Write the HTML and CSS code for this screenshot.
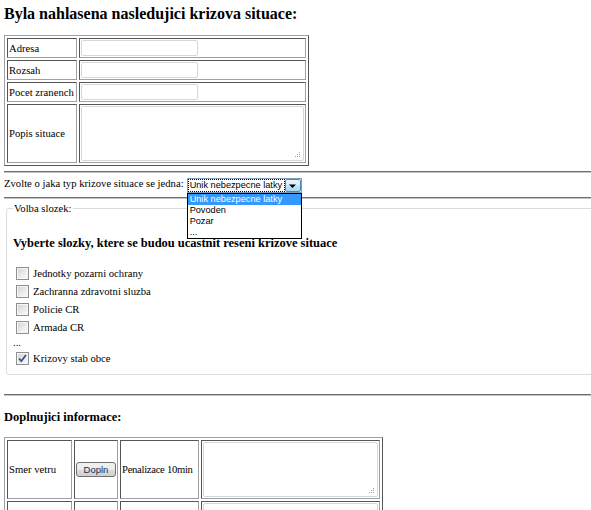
FILE: index.html
```html
<!DOCTYPE html>
<html>
<head>
<meta charset="utf-8">
<title>Krizova situace</title>
<link rel="stylesheet" href="styles.css">
</head>
<body>
<h2 class="title">Byla nahlasena nasledujici krizova situace:</h2>
<table class="grid report">
  <tr><td class="lbl">Adresa</td><td class="fld"><input class="txt" type="text"></td></tr>
  <tr><td class="lbl">Rozsah</td><td class="fld"><input class="txt" type="text"></td></tr>
  <tr><td class="lbl">Pocet zranench</td><td class="fld"><input class="txt" type="text"></td></tr>
  <tr><td class="lbl">Popis situace</td><td class="fld"><textarea class="area wide"></textarea></td></tr>
</table>
<hr class="rule first">
<div class="choose">
  <span class="choose-label">Zvolte o jaka typ krizove situace se jedna:</span>
  <div class="select">
    <span class="select-text"><span class="focus">Unik nebezpecne latky</span></span>
    <span class="select-btn"><svg width="9" height="6" viewBox="0 0 9 6"><path d="M1 1.5h7L4.5 5z" fill="#000"/></svg></span>
    <ul class="options">
      <li class="hl">Unik nebezpecne latky</li>
      <li>Povoden</li>
      <li>Pozar</li>
      <li>...</li>
    </ul>
  </div>
</div>
<hr class="rule">
<fieldset class="units">
  <legend>Volba slozek:</legend>
  <h3 class="sub">Vyberte slozky, ktere se budou ucastnit reseni krizove situace</h3>
  <div class="cb-row"><span class="cb"></span>Jednotky pozarni ochrany</div>
  <div class="cb-row"><span class="cb"></span>Zachranna zdravotni sluzba</div>
  <div class="cb-row"><span class="cb"></span>Policie CR</div>
  <div class="cb-row"><span class="cb"></span>Armada CR</div>
  <div class="dots">...</div>
  <div class="cb-row"><span class="cb"><svg width="11" height="11" viewBox="0 0 11 11"><path d="M2 5.5l2.3 2.6L9 2" fill="none" stroke="#3b4f8c" stroke-width="1.8"/></svg></span>Krizovy stab obce</div>
</fieldset>
<hr class="rule third">
<h3 class="sub2">Doplnujici informace:</h3>
<table class="grid extra">
  <tr>
    <td class="c1">Smer vetru</td>
    <td class="c2"><button class="btn" type="button">Dopln</button></td>
    <td class="c3">Penalizace 10min</td>
    <td class="c4"><textarea class="area narrow"></textarea></td>
  </tr>
  <tr>
    <td class="c1">&nbsp;</td>
    <td class="c2">&nbsp;</td>
    <td class="c3">&nbsp;</td>
    <td class="c4"><textarea class="area narrow"></textarea></td>
  </tr>
</table>
</body>
</html>
```
FILE: styles.css
```css
html {
  overflow: hidden;
  background: #fff;
}
body {
  margin: 0 0 0 4px;
  width: 660px;
  font-family: "Liberation Serif", "Times New Roman", serif;
  font-size: 10.67px;
  color: #000;
}
.title {
  font-size: 16px;
  line-height: 18px;
  font-weight: bold;
  margin: 5px 0 12px;
}
table.grid {
  border-collapse: separate;
  border-spacing: 2px;
  border: 1px solid;
  border-color: #a0a0a0 #555 #555 #a0a0a0;
}
table.grid td {
  border: 1px solid;
  border-color: #555 #a0a0a0 #a0a0a0 #555;
  padding: 1px;
  line-height: 13px;
  white-space: nowrap;
}
.report .lbl {
  width: 66px;
}
.report .fld {
  width: 223px;
}
.txt {
  display: block;
  box-sizing: border-box;
  width: 117px;
  height: 16px;
  margin: 0;
  padding: 0 2px;
  border: 1px solid #d4d8dd;
  border-radius: 2px;
  font: 10.67px "Liberation Sans", Arial, sans-serif;
}
.area {
  display: block;
  box-sizing: border-box;
  height: 55px;
  margin: 0;
  padding: 1px;
  border: 1px solid #d4d8dd;
  border-radius: 2px;
  resize: none;
  font: 10.67px "Liberation Sans", Arial, sans-serif;
  background-color: #fff;
  background-image:
    linear-gradient(#a0a0a0, #a0a0a0),
    linear-gradient(#a0a0a0, #a0a0a0),
    linear-gradient(#a0a0a0, #a0a0a0),
    linear-gradient(#a0a0a0, #a0a0a0),
    linear-gradient(#a0a0a0, #a0a0a0),
    linear-gradient(#a0a0a0, #a0a0a0);
  background-size: 1px 1px;
  background-repeat: no-repeat;
  background-position:
    right 3px bottom 3px,
    right 5px bottom 3px,
    right 7px bottom 3px,
    right 3px bottom 5px,
    right 5px bottom 5px,
    right 3px bottom 7px;
}
.area.wide {
  width: 223px;
}
.area.narrow {
  width: 175px;
}
.rule {
  height: 0;
  margin: 0;
  border: 0;
  border-top: 1px solid #6e6e6e;
  border-bottom: 1px solid #c4c4c4;
}
.rule.first {
  margin-top: 5px;
}
.rule.third {
  margin-top: 19px;
}
.choose {
  display: flex;
  align-items: flex-start;
  gap: 3px;
  height: 24px;
}
.choose-label {
  margin-top: 4px;
  line-height: 13px;
  white-space: nowrap;
}
.select {
  position: relative;
  display: flex;
  box-sizing: border-box;
  width: 115px;
  height: 15px;
  margin-top: 5px;
  border: 1px solid #7f9db9;
  background: #fff;
  font-family: "Liberation Sans", Arial, sans-serif;
  font-size: 9.2px;
}
.select-text {
  flex: 1;
  padding: 1px 1px 0 1px;
  min-width: 0;
}
.focus {
  display: block;
  height: 11px;
  line-height: 11px;
  padding-left: 1px;
  outline: 1px dotted #000;
  white-space: nowrap;
  overflow: hidden;
}
.select-btn {
  display: flex;
  align-items: center;
  justify-content: center;
  box-sizing: border-box;
  width: 16px;
  height: 13px;
  border: 1px solid #4c87c0;
  border-radius: 2px;
  background: linear-gradient(#eaf5fd 0%, #d9eefb 45%, #bee4f8 55%, #a7d9f5 100%);
}
.options {
  position: absolute;
  left: -1px;
  top: 14px;
  box-sizing: border-box;
  width: 115px;
  margin: 0;
  padding: 0;
  list-style: none;
  border: 1px solid #000;
  background: #fff;
  z-index: 5;
}
.options li {
  height: 11px;
  line-height: 11px;
  padding-left: 2px;
  white-space: nowrap;
}
.options li.hl {
  background: #3399ff;
  color: #fff;
}
.units {
  margin: 3px 0 0 2px;
  padding: 0 6px 7px;
  border: 1px solid #dcdcdc;
  border-radius: 3px;
  min-width: 0;
}
.units legend {
  padding: 0 1px;
  line-height: 13px;
}
.sub {
  font-size: 12.48px;
  line-height: 15px;
  font-weight: bold;
  margin: 21px 0 13px;
  white-space: nowrap;
}
.cb-row {
  display: flex;
  align-items: center;
  height: 18px;
  line-height: 13px;
}
.cb {
  display: flex;
  align-items: center;
  justify-content: center;
  box-sizing: border-box;
  width: 13px;
  height: 13px;
  margin: 0 4px 0 3px;
  border: 1px solid #8e8f8f;
  box-shadow: inset 0 0 0 1px #f6f6f6;
  background: linear-gradient(135deg, #cfcfcf 0%, #e9e9e9 50%, #fbfbfb 100%);
}
.dots {
  height: 13px;
  line-height: 13px;
}
.sub2 {
  font-size: 12.48px;
  line-height: 15px;
  font-weight: bold;
  margin: 14px 0 12px;
}
.extra .c1 {
  width: 61px;
}
.extra .c2 {
  width: 40px;
}
.extra .c3 {
  width: 75px;
  letter-spacing: -0.3px;
}
.extra .c4 {
  width: 175px;
}
.btn {
  display: block;
  box-sizing: border-box;
  width: 40px;
  height: 15px;
  margin: 0;
  padding: 0;
  border: 1px solid #707070;
  border-radius: 3px;
  background: linear-gradient(#f2f2f2 0%, #ebebeb 50%, #dddddd 51%, #cfcfcf 100%);
  font-family: "Liberation Sans", Arial, sans-serif;
  font-size: 9.5px;
  line-height: 13px;
  color: #1c2c4c;
}
```
